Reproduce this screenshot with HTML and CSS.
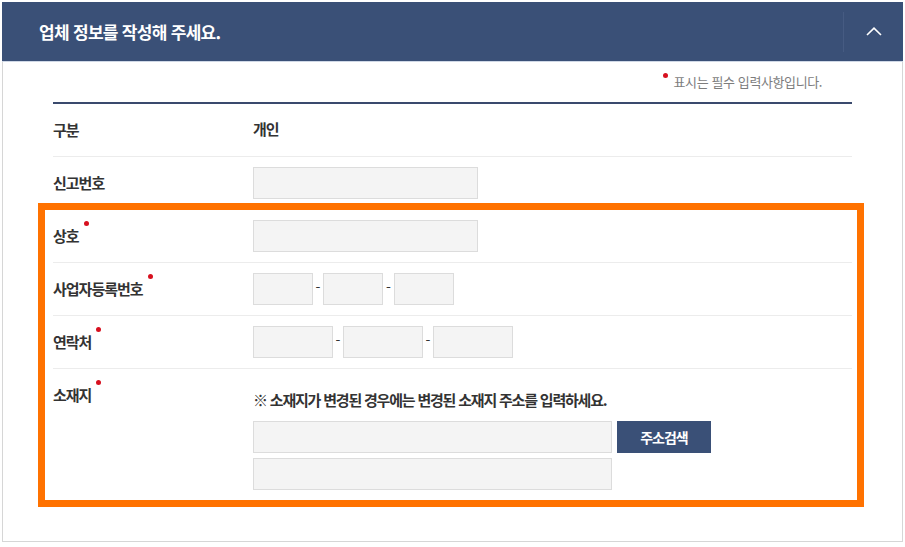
FILE: index.html
```html
<!DOCTYPE html>
<html lang="ko">
<head>
<meta charset="utf-8">
<title>업체 정보</title>
<link rel="stylesheet" href="styles.css">
</head>
<body>
<div class="panel">
  <div class="panel-head">
    <h2 class="panel-title">업체 정보를 작성해 주세요.</h2>
    <button class="toggle" type="button" aria-label="접기">
      <svg width="16" height="9" viewBox="0 0 16 9"><path d="M1 8 L8 1.2 L15 8" fill="none" stroke="#ffffff" stroke-width="1.6"/></svg>
    </button>
  </div>
  <div class="panel-body">
    <p class="req-note"><span class="req-dot"></span>표시는 필수 입력사항입니다.</p>
    <div class="form">
      <div class="row">
        <div class="label"><span class="lbl">구분</span></div>
        <div class="value"><span class="text">개인</span></div>
      </div>
      <div class="row">
        <div class="label"><span class="lbl">신고번호</span></div>
        <div class="value"><input class="field w224" type="text"></div>
      </div>
      <div class="row">
        <div class="label"><span class="lbl req">상호</span></div>
        <div class="value"><input class="field w224" type="text"></div>
      </div>
      <div class="row">
        <div class="label"><span class="lbl req">사업자등록번호</span></div>
        <div class="value">
          <input class="field w60" type="text"><span class="dash">-</span><input class="field w60" type="text"><span class="dash wide">-</span><input class="field w60" type="text">
        </div>
      </div>
      <div class="row">
        <div class="label"><span class="lbl req">연락처</span></div>
        <div class="value">
          <input class="field w80" type="text"><span class="dash">-</span><input class="field w80" type="text"><span class="dash">-</span><input class="field w80" type="text">
        </div>
      </div>
      <div class="row last">
        <div class="label"><span class="lbl req">소재지</span></div>
        <div class="value stack">
          <p class="notice">※ 소재지가 변경된 경우에는 변경된 소재지 주소를 입력하세요.</p>
          <div class="addr-line">
            <input class="field w360" type="text"><button class="btn-search" type="button">주소검색</button>
          </div>
          <div class="addr-line">
            <input class="field w360" type="text">
          </div>
        </div>
      </div>
    </div>
  </div>
  <div class="highlight"></div>
</div>
</body>
</html>
```

FILE: styles.css
```css
* { box-sizing: border-box; }
html, body { margin: 0; padding: 0; background: #ffffff; }
body {
  font-family: "Noto Sans CJK KR", "Noto Sans", sans-serif;
  color: #333333;
}
.panel {
  position: relative;
  width: 901px;
  margin: 2px 0 0 2px;
}
.panel-head {
  display: flex;
  align-items: center;
  height: 60px;
  background: #3a5077;
  border-bottom: 1px solid #cfd8e6;
  padding-left: 37px;
}
.panel-title {
  flex: 1;
  margin: 0;
  font-size: 17px;
  font-weight: 700;
  letter-spacing: -0.7px;
  color: #ffffff;
  line-height: 20px;
}
.toggle {
  width: 60px;
  height: 40px;
  padding: 0;
  border: 0;
  border-left: 1px solid #465b82;
  background: transparent;
  display: flex;
  align-items: center;
  justify-content: center;
}
.panel-body {
  border: 1px solid #d6d6d6;
  border-top: 0;
  padding: 0 50px 41px 50px;
}
.req-note {
  margin: 0;
  padding: 10px 30px 10px 0;
  line-height: 20px;
  text-align: right;
  font-size: 13px;
  letter-spacing: -0.4px;
  color: #7d7d7d;
}
.req-dot {
  display: inline-block;
  width: 5px;
  height: 5px;
  border-radius: 50%;
  background: #d7101f;
  vertical-align: 9px;
  margin-right: 6px;
}
.form {
  border-top: 2px solid #3a4a6d;
}
.row {
  display: flex;
  border-bottom: 1px solid #ececec;
}
.row.last { border-bottom: 0; }
.label {
  width: 200px;
  flex: none;
  padding: 10px 0;
  line-height: 32px;
  font-size: 15px;
  font-weight: 700;
  letter-spacing: -1px;
  color: #333333;
}
.lbl { position: relative; }
.lbl.req::after {
  content: "";
  position: absolute;
  right: -10px;
  top: -4px;
  width: 5px;
  height: 5px;
  border-radius: 50%;
  background: #d7101f;
}
.value {
  flex: 1;
  display: flex;
  align-items: center;
  padding: 10px 0;
  min-height: 52px;
}
.value .text {
  font-size: 15px;
  font-weight: 700;
  letter-spacing: -1px;
  line-height: 32px;
  margin-top: -2px;
}
.field {
  height: 32px;
  border: 1px solid #dcdcdc;
  background: #f4f4f4;
  padding: 0 8px;
  margin: 0;
  font-size: 13px;
  outline: none;
}
.w224 { width: 225px; }
.w60 { width: 60px; }
.w80 { width: 80px; }
.w360 { width: 359px; }
.dash {
  width: 10px;
  text-align: center;
  font-size: 14px;
  color: #333333;
  line-height: 32px;
  margin-top: -4px;
}
.dash.wide { width: 11px; }
.value.stack {
  flex-direction: column;
  align-items: flex-start;
  padding-top: 20px;
}
.notice {
  margin: 0 0 10px 0;
  line-height: 22px;
  font-size: 15px;
  font-weight: 700;
  letter-spacing: -1.2px;
  color: #333333;
}
.addr-line {
  display: flex;
  gap: 5px;
}
.addr-line + .addr-line { margin-top: 5px; }
.btn-search {
  width: 94px;
  height: 32px;
  border: 0;
  background: #3a5077;
  color: #ffffff;
  font-family: "Noto Sans CJK KR", "Noto Sans", sans-serif;
  font-size: 14px;
  font-weight: 700;
  letter-spacing: -1px;
  padding: 0;
}
.highlight {
  position: absolute;
  left: 36px;
  top: 201px;
  width: 826px;
  height: 304px;
  border: 7px solid #ff7200;
  pointer-events: none;
}
```
